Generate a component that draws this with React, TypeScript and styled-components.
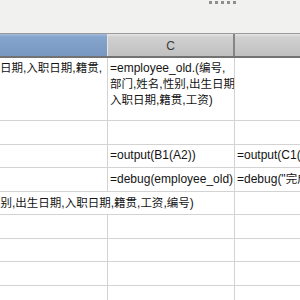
import styled, { createGlobalStyle } from 'styled-components';

const GlobalStyle = createGlobalStyle`
  html, body {
    margin: 0;
    padding: 0;
    background: #ffffff;
  }
  body {
    font-family: "Liberation Sans", "Noto Sans CJK SC", sans-serif;
  }
`;

// CJK glyphs in the sheet are a touch narrower than the latin text
const mix = (text: string) =>
  text.split(/([\u4e00-\u9fff]+)/).map((part, i) =>
    /[\u4e00-\u9fff]/.test(part) ? <Han key={i}>{part}</Han> : part
  );

const App = () => {
  return (
    <Window>
      <GlobalStyle />
      <Splitter>
        <GripDot />
        <GripDot />
        <GripDot />
        <GripDot />
        <GripDot />
      </Splitter>
      <ColHeads>
        <ColHead $active />
        <ColHead>C</ColHead>
        <ColHead $last />
      </ColHeads>
      <Grid>
        <Cell $align="end">
          <Line>{mix('出生日期,入职日期,籍贯,')}</Line>
        </Cell>
        <Cell $top>
          <Line>{mix('=employee_old.(编号,')}</Line>
          <Line>{mix('部门,姓名,性别,出生日期,')}</Line>
          <Line>{mix('入职日期,籍贯,工资)')}</Line>
        </Cell>
        <Cell $last />

        <Cell />
        <Cell />
        <Cell $last />

        <Cell />
        <Cell>
          <Line>=output(B1(A2))</Line>
        </Cell>
        <Cell $last>
          <Line>=output(C1(A2))</Line>
        </Cell>

        <Cell />
        <Cell>
          <Line>=debug(employee_old)</Line>
        </Cell>
        <Cell $last>
          <Line>{mix('=debug("完成")')}</Line>
        </Cell>

        <Cell $span={2}>
          <Line $shift={-13}>{mix('性别,出生日期,入职日期,籍贯,工资,编号)')}</Line>
        </Cell>
        <Cell $last />

        <Cell />
        <Cell />
        <Cell $last />

        <Cell />
        <Cell />
        <Cell $last />

        <Cell />
        <Cell />
        <Cell $last />

        <Cell />
        <Cell />
        <Cell $last />
      </Grid>
    </Window>
  );
};

const Window = styled.div`
  width: 300px;
  height: 300px;
  overflow: hidden;
  display: flex;
  flex-direction: column;
  background: #ffffff;
`;

const Splitter = styled.div`
  flex: none;
  height: 34px;
  box-sizing: border-box;
  display: flex;
  align-items: flex-start;
  gap: 3px;
  padding: 1px 0 0 209px;
  background: #f1f2f0;
  border-bottom: 1px solid #9b9b9b;
`;

const GripDot = styled.span`
  width: 3px;
  height: 3px;
  background: #8f8f8f;
`;

const ColHeads = styled.div`
  flex: none;
  display: grid;
  grid-template-columns: 108px 127px 1fr;
  height: 24px;
  box-sizing: border-box;
  border-bottom: 2px solid #727272;
`;

const ColHead = styled.div<{ $active?: boolean; $last?: boolean }>`
  display: flex;
  align-items: center;
  justify-content: center;
  padding-top: 2px;
  box-sizing: border-box;
  font-size: 12px;
  color: #3a3a3a;
  background: ${(p) =>
    p.$active
      ? 'linear-gradient(#a3bbdb 0, #86a5cc 3px, #7797c1 100%)'
      : 'linear-gradient(#e6e6e6 0, #d0d0d0 3px, #c0c0c0 100%)'};
  border-right: ${(p) =>
    p.$last ? 'none' : p.$active ? '1px solid #e4e4e4' : '2px solid #858585'};
`;

const Grid = styled.div`
  flex: 1;
  display: grid;
  grid-template-columns: 108px 127px 1fr;
  grid-template-rows: 63px repeat(9, 23.5px);
`;

const Cell = styled.div<{ $top?: boolean; $align?: 'end'; $last?: boolean; $span?: number }>`
  grid-column: ${(p) => (p.$span ? `span ${p.$span}` : 'auto')};
  display: flex;
  flex-direction: column;
  justify-content: ${(p) => (p.$top || p.$align === 'end' ? 'flex-start' : 'center')};
  align-items: ${(p) => (p.$align === 'end' ? 'flex-end' : 'flex-start')};
  padding: ${(p) => (p.$top ? '2px 0 0 2px' : p.$align === 'end' ? '2px 5px 0 0' : '0 0 0 2px')};
  box-sizing: border-box;
  overflow: hidden;
  border-bottom: 1px solid #d3d3d3;
  border-right: ${(p) => (p.$last ? 'none' : '1px solid #d3d3d3')};
`;

const Line = styled.div<{ $shift?: number }>`
  white-space: nowrap;
  font-size: 12px;
  line-height: 15px;
  color: #141414;
  margin-left: ${(p) => p.$shift ?? 0}px;
`;

const Han = styled.span`
  font-family: "Noto Sans CJK SC", sans-serif;
  font-size: 11.5px;
`;

export default App;
